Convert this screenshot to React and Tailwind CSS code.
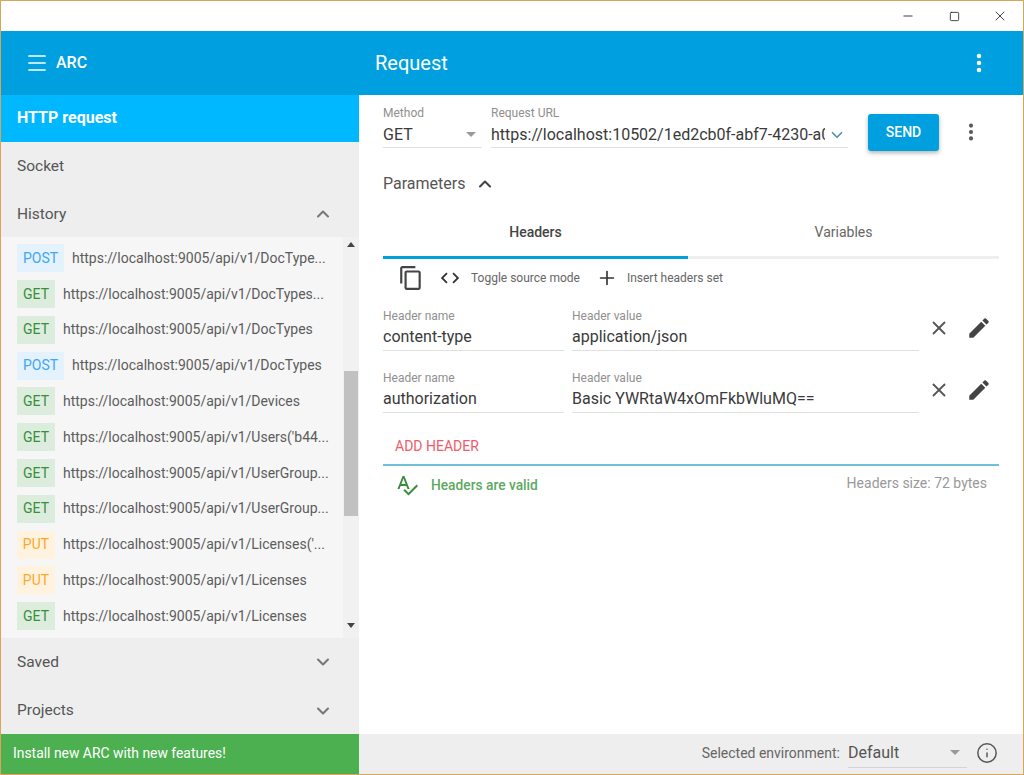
import { Menu, ChevronUp, ChevronDown, EllipsisVertical, Minus, Square, X, Info, Plus } from 'lucide-react'

const HISTORY = [
  { method: 'POST', url: 'https://localhost:9005/api/v1/DocType...' },
  { method: 'GET', url: 'https://localhost:9005/api/v1/DocTypes...' },
  { method: 'GET', url: 'https://localhost:9005/api/v1/DocTypes' },
  { method: 'POST', url: 'https://localhost:9005/api/v1/DocTypes' },
  { method: 'GET', url: 'https://localhost:9005/api/v1/Devices' },
  { method: 'GET', url: "https://localhost:9005/api/v1/Users('b44..." },
  { method: 'GET', url: 'https://localhost:9005/api/v1/UserGroup...' },
  { method: 'GET', url: 'https://localhost:9005/api/v1/UserGroup...' },
  { method: 'PUT', url: "https://localhost:9005/api/v1/Licenses('..." },
  { method: 'PUT', url: 'https://localhost:9005/api/v1/Licenses' },
  { method: 'GET', url: 'https://localhost:9005/api/v1/Licenses' },
]

const HEADERS = [
  { name: 'content-type', value: 'application/json' },
  { name: 'authorization', value: 'Basic YWRtaW4xOmFkbWluMQ==' },
]

function methodClass(method) {
  if (method === 'POST') return 'w-[47px] bg-[#e3f2fd] text-[#42a5f5]'
  if (method === 'PUT') return 'w-[38px] bg-[#fff3e0] text-[#ffa726]'
  return 'w-[38px] bg-[#dcedde] text-[#388e3c]'
}

function HistoryRow({ item }) {
  return (
    <div className="flex h-[35.8px] items-center">
      <span className={`flex h-[28px] shrink-0 items-center justify-center text-[14px] ${methodClass(item.method)}`}>
        {item.method}
      </span>
      <span className="ml-[8px] whitespace-nowrap text-[14px] text-[#5c5c5c]">{item.url}</span>
    </div>
  )
}

function NavRow({ label, open, className }) {
  return (
    <div className={`flex h-[48px] items-center justify-between pl-[16px] pr-[26px] text-[15.5px] text-[#555] ${className || ''}`}>
      <span>{label}</span>
      {open === true && <ChevronUp className="h-[20px] w-[20px] text-[#777]" strokeWidth={2.5} />}
      {open === false && <ChevronDown className="h-[20px] w-[20px] text-[#777]" strokeWidth={2.5} />}
    </div>
  )
}

function Field({ label, value, width }) {
  return (
    <div className={`flex h-[43px] flex-col border-b border-[#e0e0e0] ${width}`}>
      <span className="h-[17px] text-[12px] leading-[16px] text-[#8f8f8f]">{label}</span>
      <span className="text-[16px] leading-[24px] text-[#3a3a3a]">{value}</span>
    </div>
  )
}

function HeaderRow({ header }) {
  return (
    <div className="flex h-[62px] items-start">
      <Field label="Header name" value={header.name} width="w-[181px]" />
      <div className="w-[8px]" />
      <Field label="Header value" value={header.value} width="w-[347px]" />
      <X className="ml-[9px] mt-[9px] h-[22px] w-[22px] text-[#555]" strokeWidth={2} />
      <svg viewBox="0 0 24 24" className="ml-[16px] mt-[7px] h-[26px] w-[26px] fill-[#444]">
        <path d="M3 17.25V21h3.75L17.81 9.94l-3.75-3.75L3 17.25zM20.71 7.04a1 1 0 0 0 0-1.41l-2.34-2.34a1 1 0 0 0-1.41 0l-1.83 1.83 3.75 3.75 1.83-1.83z" />
      </svg>
    </div>
  )
}

export default function App() {
  return (
    <div className="flex h-[775px] w-[1024px] flex-col overflow-hidden border border-[#d9a55b] bg-white font-['Roboto',sans-serif]">
      {/* window title bar */}
      <div className="flex h-[30px] shrink-0 items-center justify-end text-[#222]">
        <div className="flex w-[46px] justify-center"><Minus className="h-[14px] w-[14px]" strokeWidth={1.5} /></div>
        <div className="flex w-[46px] justify-center"><Square className="h-[11px] w-[11px]" strokeWidth={1.8} /></div>
        <div className="flex w-[46px] justify-center"><X className="h-[16px] w-[16px]" strokeWidth={1.3} /></div>
      </div>

      {/* app bar */}
      <div className="flex h-[64px] shrink-0 bg-[#00a0e0] text-white">
        <div className="flex w-[358px] items-center pl-[24px]">
          <Menu className="h-[24px] w-[24px]" strokeWidth={1.7} />
          <span className="ml-[7px] text-[16px] font-medium">ARC</span>
        </div>
        <div className="flex flex-1 items-center justify-between pl-[16px] pr-[32px]">
          <span className="text-[20px]">Request</span>
          <EllipsisVertical className="h-[24px] w-[24px]" strokeWidth={2.5} />
        </div>
      </div>

      <div className="flex min-h-0 flex-1">
        {/* sidebar */}
        <div className="flex w-[358px] shrink-0 flex-col bg-[#eeeeee]">
          <div className="flex h-[47px] items-center bg-[#00b8ff] pl-[16px] text-[16px] font-bold text-white">HTTP request</div>
          <NavRow label="Socket" className="pt-[2px]" />
          <NavRow label="History" open={true} className="pt-[2px]" />
          <div className="flex h-[401px] shrink-0">
            <div className="w-[342px] overflow-hidden bg-[#f6f6f6] pl-[16px] pt-[3px]">
              {HISTORY.map((item, i) => <HistoryRow key={i} item={item} />)}
            </div>
            <div className="flex w-[16px] flex-col items-center bg-[#f1f1f1] pt-[5px]">
              <div className="h-0 w-0 border-x-[4px] border-b-[5px] border-x-transparent border-b-[#444]" />
              <div className="mt-[124px] h-[145px] w-[14px] bg-[#c1c1c1]" />
              <div className="mt-[107px] h-0 w-0 border-x-[4px] border-t-[5px] border-x-transparent border-t-[#444]" />
            </div>
          </div>
          <NavRow label="Saved" open={false} />
          <NavRow label="Projects" open={false} className="pt-[1px]" />
        </div>

        {/* request panel */}
        <div className="flex min-w-0 flex-1 flex-col pl-[24px] pr-[24px]">
          <div className="flex h-[52px] items-start pt-[9px]">
            <div className="flex h-[44px] w-[99px] flex-col border-b border-[#e0e0e0]">
              <span className="text-[12px] leading-[18px] text-[#8f8f8f]">Method</span>
              <div className="flex items-center justify-between pr-[6px] text-[16px] leading-[25px] text-[#3a3a3a]">
                GET
                <span className="h-0 w-0 border-x-[5px] border-t-[5px] border-x-transparent border-t-[#999]" />
              </div>
            </div>
            <div className="ml-[9px] flex h-[44px] w-[357px] flex-col border-b border-[#e0e0e0]">
              <span className="text-[12px] leading-[18px] text-[#8f8f8f]">Request URL</span>
              <div className="flex items-center text-[16px] leading-[25px] text-[#3a3a3a]">
                <span className="w-[334px] overflow-hidden whitespace-nowrap">https://localhost:10502/1ed2cb0f-abf7-4230-a0f1</span>
                <ChevronDown className="ml-[3px] h-[18px] w-[18px] text-[#4f8fb0]" strokeWidth={2.2} />
              </div>
            </div>
            <button className="ml-[20px] mt-[10px] flex h-[37px] w-[71px] items-center justify-center rounded-[3px] bg-[#00a0e0] pb-[1px] text-[14px] font-medium text-white shadow-[0_2px_4px_rgba(0,0,0,0.3)]">
              SEND
            </button>
            <EllipsisVertical className="ml-[21px] mt-[17px] h-[22px] w-[22px] text-[#555]" strokeWidth={2.5} />
          </div>

          <div className="flex h-[49px] items-center pt-[25px] text-[16px] text-[#555]">
            <span>Parameters</span>
            <ChevronUp className="ml-[10px] h-[20px] w-[20px] text-[#444]" strokeWidth={2.5} />
          </div>

          <div className="mt-[11px] flex h-[52px] border-b-[3px] border-[#eeeeee] text-[14px]">
            <div className="-mb-[3px] flex w-[305px] items-center justify-center border-b-[3px] border-[#00a0d8] pt-[1px] font-medium text-[#444]">Headers</div>
            <div className="flex flex-1 items-center justify-center pt-[1px] text-[#666]">Variables</div>
          </div>

          <div className="flex h-[38px] items-center text-[12px] text-[#666]">
            <svg viewBox="0 0 24 24" className="ml-[15px] h-[26px] w-[26px] fill-[#444]">
              <path d="M16 1H4c-1.1 0-2 .9-2 2v14h2V3h12V1zm3 4H8c-1.1 0-2 .9-2 2v14c0 1.1.9 2 2 2h11c1.1 0 2-.9 2-2V7c0-1.1-.9-2-2-2zm0 16H8V7h11v14z" />
            </svg>
            <svg viewBox="0 0 24 24" className="ml-[15px] h-[22px] w-[22px] fill-[#333]">
              <path d="M9.4 16.6L4.8 12l4.6-4.6L8 6l-6 6 6 6 1.4-1.4zm5.2 0l4.6-4.6-4.6-4.6L16 6l6 6-6 6-1.4-1.4z" />
            </svg>
            <span className="ml-[10px]">Toggle source mode</span>
            <Plus className="ml-[16px] h-[22px] w-[22px] text-[#333]" strokeWidth={1.8} />
            <span className="ml-[9px]">Insert headers set</span>
          </div>

          <div className="pt-[11px]">
            {HEADERS.map((h, i) => <HeaderRow key={i} header={h} />)}
          </div>

          <div className="flex h-[34px] items-center border-b-[2px] border-[#6fbfd6] pb-[4px] pl-[12px] text-[14px] text-[#ef5b6b]">
            ADD HEADER
          </div>

          <div className="flex h-[38px] items-center justify-between pr-[12px]">
            <div className="flex items-center pl-[12px]">
              <svg viewBox="0 0 24 24" className="h-[24px] w-[24px] fill-[#388e3c]">
                <path d="M12.45 16h2.09L9.43 3H7.57L2.46 16h2.09l1.12-3h5.64l1.14 3zm-6.02-5L8.5 5.48 10.57 11H6.43zm15.16.59l-8.09 8.09L9.83 16l-1.41 1.41 5.09 5.09L23 13l-1.41-1.41z" />
              </svg>
              <span className="ml-[12px] text-[13.75px] font-medium text-[#5da85f]">Headers are valid</span>
            </div>
            <span className="mb-[4px] text-[14px] text-[#999]">Headers size: 72 bytes</span>
          </div>
        </div>
      </div>

      {/* footer */}
      <div className="flex h-[40px] shrink-0 bg-[#eeeeee]">
        <div className="flex w-[358px] items-center bg-[#4caf50] pb-[1px] pl-[12px] text-[13.9px] text-white">Install new ARC with new features!</div>
        <div className="flex flex-1 items-center justify-end pb-[2px] pr-[25px]">
          <span className="text-[14px] text-[#666]">Selected environment:</span>
          <div className="ml-[8px] flex h-[30px] w-[119px] items-center justify-between border-b border-[#d5d5d5] pr-[7px] text-[16px] text-[#555]">
            Default
            <span className="h-0 w-0 border-x-[5px] border-t-[5px] border-x-transparent border-t-[#999]" />
          </div>
          <Info className="ml-[9px] h-[22px] w-[22px] text-[#555]" strokeWidth={1.6} />
        </div>
      </div>
    </div>
  )
}
